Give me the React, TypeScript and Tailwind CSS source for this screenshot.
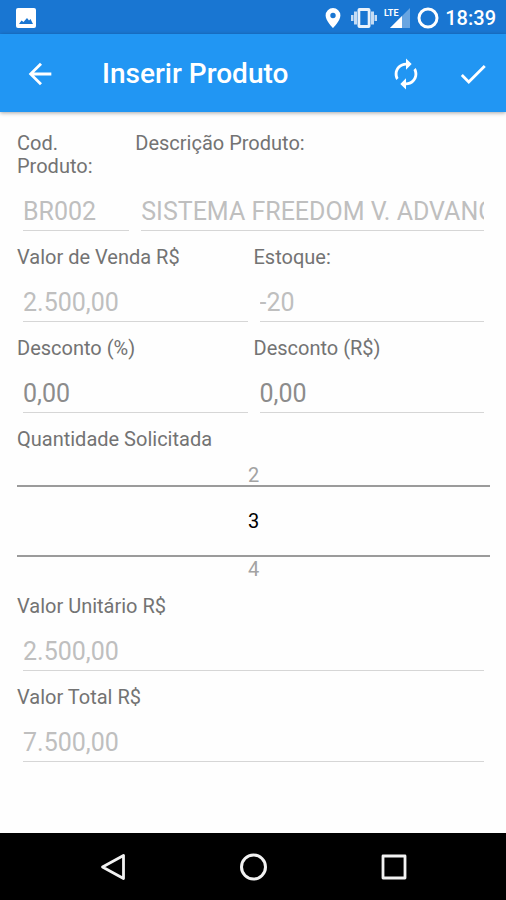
import { useState } from 'react';
import clsx from 'clsx';
import { MdArrowBack, MdAutorenew, MdCheck } from 'react-icons/md';

interface FieldProps {
  id: string;
  label: string;
  value: string;
  editable?: boolean;
  className?: string;
}

function Field({ id, label, value, editable = false, className }: FieldProps) {
  const [text, setText] = useState(value);

  return (
    <div className={clsx('flex flex-col justify-between min-w-0', className)}>
      <label htmlFor={id} className="text-[20px] leading-[23px] text-[#737373]">
        {label}
      </label>
      <div className="px-[6px] pt-[17px] pb-[15px]">
        <input
          id={id}
          type="text"
          value={text}
          onChange={(e) => setText(e.target.value)}
          disabled={!editable}
          className="block w-full h-9 pb-[2px] text-[25px] border-b border-[#d6d6d6] bg-transparent outline-none text-[#8c8c8c] disabled:text-[#bfbfbf]"
        />
      </div>
    </div>
  );
}

function QuantityPicker() {
  const [quantity, setQuantity] = useState(3);

  return (
    <div className="flex flex-col">
      <label htmlFor="quantidade" className="text-[20px] leading-[23px] text-[#737373]">
        Quantidade Solicitada
      </label>
      <button
        type="button"
        onClick={() => setQuantity(Math.max(1, quantity - 1))}
        className="flex h-[34px] items-end justify-center text-[20px] leading-5 text-[#a3a3a3]"
      >
        {quantity - 1}
      </button>
      <input
        id="quantidade"
        type="text"
        inputMode="numeric"
        value={quantity}
        onChange={(e) => setQuantity(Number(e.target.value) || 1)}
        className="block w-full h-[72px] border-y-2 border-[#9b9b9b] bg-transparent text-center text-[20px] text-black outline-none"
      />
      <button
        type="button"
        onClick={() => setQuantity(quantity + 1)}
        className="flex h-[38px] items-start justify-center pt-[2px] text-[20px] leading-5 text-[#a3a3a3]"
      >
        {quantity + 1}
      </button>
    </div>
  );
}

function StatusBar() {
  return (
    <div className="flex h-[34px] items-center bg-[#1976d2] pl-4 pr-[10px] pt-px text-white">
      <svg className="h-5 w-5" viewBox="0 0 20 20" aria-hidden="true">
        <rect width="20" height="20" rx="2" fill="#fff" />
        <path d="M3 16l2.500-3.500 2 1.500 3.500-4 2 2.500 1.500-1.500L17 16z" fill="#1976d2" />
      </svg>
      <div className="ml-auto flex items-center">
        <svg className="h-5 w-4" viewBox="0 0 16 20" fill="#fff" aria-hidden="true">
          <path
            fillRule="evenodd"
            d="M8 0a7.400 7.400 0 0 0-7.400 7.400C.6 12.600 8 20 8 20s7.400-7.400 7.400-12.600A7.400 7.400 0 0 0 8 0zm0 4.800a2.700 2.700 0 1 1 0 5.400 2.700 2.700 0 0 1 0-5.400z"
          />
        </svg>
        <svg className="ml-[9px] h-5 w-7" viewBox="0 0 28 20" fill="#fff" aria-hidden="true">
          <path
            fillRule="evenodd"
            d="M9.500 0h9a2 2 0 0 1 2 2v16a2 2 0 0 1-2 2h-9a2 2 0 0 1-2-2V2a2 2 0 0 1 2-2zm.800 3v14h7.400V3z"
            opacity=".9"
          />
          <path d="M4 3.500h3v13H4zM21 3.500h3v13h-3zM1 7h2.500v6H1zM24.500 7H27v6h-2.500z" opacity=".75" />
        </svg>
        <svg className="ml-[6px] h-5 w-[26px]" viewBox="0 0 26 20" fill="#fff" aria-hidden="true">
          <path d="M26 0v20H6z" opacity=".35" />
          <path d="M18 8v12H6z" />
          <path d="M0 0h16v9H0z" fill="#1976d2" />
          <text x="0" y="8" fontSize="9" fontWeight="700">
            LTE
          </text>
        </svg>
        <svg className="ml-[7px] h-[22px] w-[22px]" viewBox="0 0 22 22" fill="none" aria-hidden="true">
          <circle cx="11" cy="11" r="9" stroke="#fff" strokeWidth="3" />
        </svg>
        <span className="ml-[6px] text-[20px] font-medium leading-6">18:39</span>
      </div>
    </div>
  );
}

function AppBar() {
  return (
    <header className="z-10 flex h-[78px] items-center bg-[#2196f3] pl-[23px] pr-4 pt-[2px] text-white shadow-[0_1px_4px_rgba(0,0,0,0.35)]">
      <button type="button" aria-label="Voltar">
        <MdArrowBack className="h-[34px] w-[34px]" />
      </button>
      <h1 className="ml-[45px] text-[28px] font-medium leading-8">Inserir Produto</h1>
      <div className="ml-auto flex gap-[33px]">
        <button type="button" aria-label="Atualizar">
          <MdAutorenew className="h-[34px] w-[34px]" />
        </button>
        <button type="button" aria-label="Confirmar">
          <MdCheck className="h-[34px] w-[34px]" />
        </button>
      </div>
    </header>
  );
}

function NavigationBar() {
  return (
    <nav className="flex h-[67px] items-center justify-center gap-[112px] bg-black">
      <button type="button" aria-label="Voltar para a tela anterior">
        <svg className="h-7 w-7" viewBox="0 0 28 28" fill="none" stroke="#f2f2f2" strokeWidth="2.800" strokeLinejoin="round">
          <path d="M24.500 2.500v23L3.500 14z" />
        </svg>
      </button>
      <button type="button" aria-label="Início">
        <svg className="h-7 w-7" viewBox="0 0 28 28" fill="none" stroke="#f2f2f2" strokeWidth="3">
          <circle cx="14.500" cy="14" r="12" />
        </svg>
      </button>
      <button type="button" aria-label="Recentes">
        <svg className="h-7 w-7" viewBox="0 0 28 28" fill="none" stroke="#f2f2f2" strokeWidth="2.800" strokeLinejoin="round">
          <rect x="4" y="3" width="22" height="22" />
        </svg>
      </button>
    </nav>
  );
}

export default function App() {
  return (
    <div className="flex min-h-screen flex-col bg-[#fefefe] font-['Roboto',sans-serif]">
      <StatusBar />
      <AppBar />
      <main className="flex-1 pl-[17px] pr-4 pt-5">
        <form>
          <div className="grid grid-cols-4">
            <Field id="codigo" label="Cod. Produto:" value="BR002" />
            <Field
              id="descricao"
              label="Descrição Produto:"
              value="SISTEMA FREEDOM V. ADVANCED"
              className="col-span-3"
            />
          </div>
          <div className="grid grid-cols-2">
            <Field id="valor-venda" label="Valor de Venda R$" value="2.500,00" />
            <Field id="estoque" label="Estoque:" value="-20" />
            <Field id="desconto-percentual" label="Desconto (%)" value="0,00" editable />
            <Field id="desconto-valor" label="Desconto (R$)" value="0,00" editable />
          </div>
          <QuantityPicker />
          <Field id="valor-unitario" label="Valor Unitário R$" value="2.500,00" />
          <Field id="valor-total" label="Valor Total R$" value="7.500,00" />
        </form>
      </main>
      <NavigationBar />
    </div>
  );
}
